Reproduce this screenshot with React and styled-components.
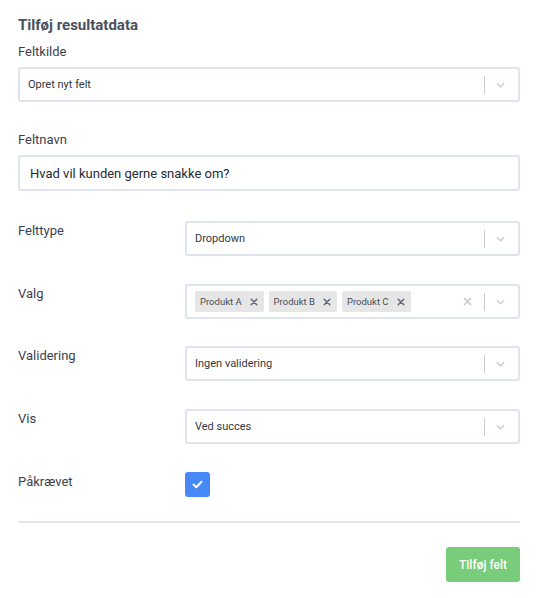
import styled, { createGlobalStyle } from 'styled-components';

const GlobalStyle = createGlobalStyle`
  body {
    margin: 0;
    background: #ffffff;
    font-family: Roboto, "Noto Sans", sans-serif;
    color: #3a3f4b;
  }
`;

const Page = styled.div`
  padding: 15px 29px 16px 18px;
  width: 502px;
`;

const Title = styled.h2`
  margin: 0;
  font-size: 15px;
  line-height: 20px;
  font-weight: 700;
  color: #4b505e;
`;

const Stack = styled.div`
  display: flex;
  flex-direction: column;
  gap: 6px;
  margin-top: ${({ top }) => top}px;
`;

const Label = styled.div`
  font-size: 13px;
  line-height: 18px;
  color: #3d4250;
`;

const Row = styled.div`
  display: flex;
  align-items: flex-start;
  margin-top: ${({ top }) => top}px;
`;

const RowLabel = styled(Label)`
  width: 167px;
  flex-shrink: 0;
  padding-top: 1px;
`;

const SelectBox = styled.div`
  flex: 1 1 auto;
  box-sizing: border-box;
  height: 35px;
  display: flex;
  align-items: center;
  border: 2px solid #dfe3ee;
  border-radius: 3px;
  background: #fff;
  padding-left: 8px;
`;

const Value = styled.div`
  flex: 1;
  font-size: 11px;
  color: #333842;
`;

const Tags = styled.div`
  flex: 1;
  display: flex;
  gap: 5px;
`;

const Tag = styled.div`
  display: flex;
  align-items: center;
  gap: 8px;
  height: 21px;
  padding: 0 6px 0 5px;
  background: #e6e6e6;
  border-radius: 2px;
  font-size: 9.5px;
  color: #4a4e57;
`;

const Indicators = styled.div`
  display: flex;
  align-items: center;
  height: 100%;
`;

const ClearIcon = styled.div`
  display: flex;
  padding: 0 12px 0 8px;
`;

const Separator = styled.span`
  width: 1px;
  height: 18px;
  background: #cccccc;
`;

const Chevron = styled.div`
  display: flex;
  padding: 0 13px 0 11px;
`;

const TextInput = styled.div`
  box-sizing: border-box;
  height: 36px;
  display: flex;
  align-items: center;
  border: 2px solid #dfe3ee;
  border-radius: 3px;
  padding-left: 10px;
  font-size: 13px;
  color: #252a34;
`;

const Checkbox = styled.div`
  width: 25px;
  height: 25px;
  border-radius: 3px;
  background: #4688f4;
  display: flex;
  align-items: center;
  justify-content: center;
`;

const Divider = styled.hr`
  margin: 24px 0 0;
  border: 0;
  height: 2px;
  background: #dfe3ee;
`;

const Footer = styled.div`
  display: flex;
  justify-content: flex-end;
  margin-top: 24px;
`;

const Button = styled.button`
  height: 35px;
  width: 74px;
  border: 0;
  border-radius: 3px;
  background: #79cc7a;
  color: #fff;
  font-family: inherit;
  font-size: 12px;
  font-weight: 500;
  padding: 0;
`;

const ChevronDown = () => (
  <Chevron>
    <svg width="9" height="6" viewBox="0 0 10 6">
      <path d="M1 1l4 4 4-4" fill="none" stroke="#c9c9c9" strokeWidth="1.4" />
    </svg>
  </Chevron>
);

const Cross = ({ size, color, width }) => (
  <svg width={size} height={size} viewBox="0 0 10 10">
    <path d="M1.5 1.5l7 7M8.5 1.5l-7 7" stroke={color} strokeWidth={width} strokeLinecap="round" />
  </svg>
);

const Select = ({ value }) => (
  <SelectBox>
    <Value>{value}</Value>
    <Indicators>
      <Separator />
      <ChevronDown />
    </Indicators>
  </SelectBox>
);

const MultiSelect = ({ values }) => (
  <SelectBox>
    <Tags>
      {values.map((v) => (
        <Tag key={v}>
          {v}
          <Cross size={8} color="#5b6577" width={1.8} />
        </Tag>
      ))}
    </Tags>
    <Indicators>
      <ClearIcon>
        <Cross size={9} color="#c6c6c6" width={1.6} />
      </ClearIcon>
      <Separator />
      <ChevronDown />
    </Indicators>
  </SelectBox>
);

const App = () => (
  <>
    <GlobalStyle />
    <Page>
      <Title>Tilføj resultatdata</Title>
      <Stack top={8}>
        <Label>Feltkilde</Label>
        <Select value="Opret nyt felt" />
      </Stack>
      <Stack top={29}>
        <Label>Feltnavn</Label>
        <TextInput>Hvad vil kunden gerne snakke om?</TextInput>
      </Stack>
      <Row top={30}>
        <RowLabel>Felttype</RowLabel>
        <Select value="Dropdown" />
      </Row>
      <Row top={28}>
        <RowLabel>Valg</RowLabel>
        <MultiSelect values={['Produkt A', 'Produkt B', 'Produkt C']} />
      </Row>
      <Row top={27}>
        <RowLabel>Validering</RowLabel>
        <Select value="Ingen validering" />
      </Row>
      <Row top={28}>
        <RowLabel>Vis</RowLabel>
        <Select value="Ved succes" />
      </Row>
      <Row top={28}>
        <RowLabel>Påkrævet</RowLabel>
        <Checkbox>
          <svg width="11" height="9" viewBox="0 0 11 9">
            <path d="M1.5 4.6l2.8 2.6L9.5 1.8" fill="none" stroke="#fff" strokeWidth="2" strokeLinecap="round" strokeLinejoin="round" />
          </svg>
        </Checkbox>
      </Row>
      <Divider />
      <Footer>
        <Button>Tilføj felt</Button>
      </Footer>
    </Page>
  </>
);

export default App;
